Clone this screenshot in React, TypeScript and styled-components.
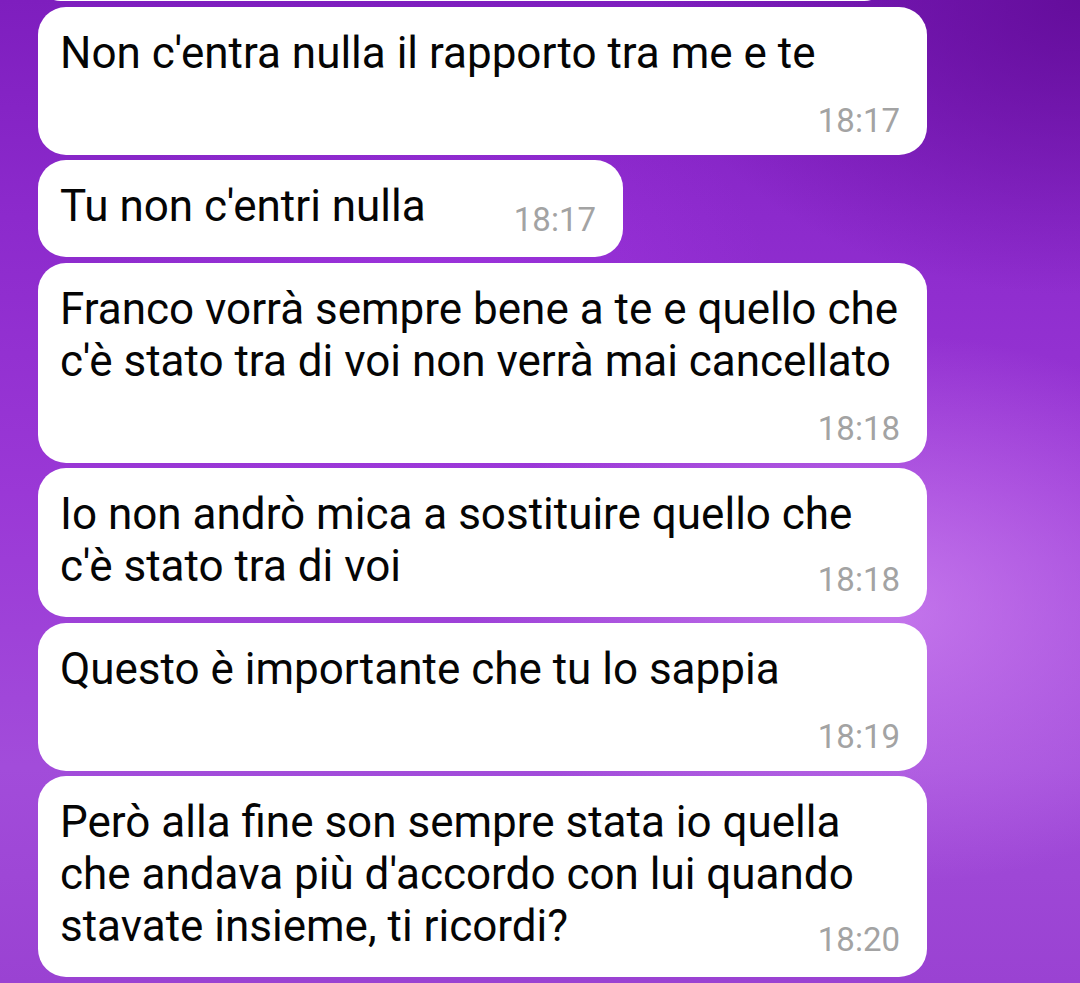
import React from "react";
import styled, { createGlobalStyle } from "styled-components";

type Message = {
  lines: string[];
  time?: string;
  width: number;
  stacked?: boolean;
};

// the list is scrolled to the bottom, only the lower edge of the first bubble shows
const messages: Message[] = [
  { lines: [], width: 849 },
  { lines: ["Non c'entra nulla il rapporto tra me e te"], time: "18:17", width: 889, stacked: true },
  { lines: ["Tu non c'entri nulla"], time: "18:17", width: 585 },
  {
    lines: ["Franco vorrà sempre bene a te e quello che", "c'è stato tra di voi non verrà mai cancellato"],
    time: "18:18",
    width: 889,
    stacked: true,
  },
  { lines: ["Io non andrò mica a sostituire quello che", "c'è stato tra di voi"], time: "18:18", width: 889 },
  { lines: ["Questo è importante che tu lo sappia"], time: "18:19", width: 889, stacked: true },
  {
    lines: [
      "Però alla fine son sempre stata io quella",
      "che andava più d'accordo con lui quando",
      "stavate insieme, ti ricordi?",
    ],
    time: "18:20",
    width: 889,
  },
];

const GlobalStyle = createGlobalStyle`
  html, body {
    margin: 0;
    padding: 0;
    height: 100%;
  }
  body {
    font-family: Roboto, "Noto Sans", "Liberation Sans", sans-serif;
    -webkit-font-smoothing: antialiased;
  }
  * {
    box-sizing: border-box;
  }
`;

const App: React.FC = () => {
  return (
    <>
      <GlobalStyle />
      <ChatArea>
        {messages.map((m, i) => (
          <Bubble key={i} $width={m.width} $stacked={!!m.stacked}>
            <MsgText>
              {m.lines.map((l, j) => (
                <Line key={j}>{l}</Line>
              ))}
            </MsgText>
            {m.time && <Time $stacked={!!m.stacked}>{m.time}</Time>}
          </Bubble>
        ))}
      </ChatArea>
    </>
  );
};

const ChatArea = styled.div`
  width: 1080px;
  height: 983px;
  overflow: hidden;
  display: flex;
  flex-direction: column;
  justify-content: flex-end;
  align-items: flex-start;
  gap: 5.5px;
  padding: 0 0 6px 38px;
  background:
    radial-gradient(ellipse 40% 30% at 100% 0%, rgba(96, 10, 150, 0.85), rgba(96, 10, 150, 0) 100%),
    radial-gradient(ellipse 55% 40% at 82% 62%, rgba(212, 140, 244, 0.7), rgba(212, 140, 244, 0) 70%),
    radial-gradient(ellipse 45% 35% at 40% 30%, rgba(176, 60, 240, 0.4), rgba(176, 60, 240, 0) 70%),
    linear-gradient(180deg, #7e1ebe 0%, #8c2acc 22%, #9a38d6 50%, #a24cda 78%, #9a42d2 100%);
`;

const Bubble = styled.div<{ $width: number; $stacked: boolean }>`
  flex-shrink: 0;
  width: ${(p) => p.$width}px;
  background: #ffffff;
  border-radius: 28px;
  padding: 20px 27px 25px 22px;
  display: grid;
  grid-template-columns: minmax(0, 1fr);
  grid-template-areas: ${(p) => (p.$stacked ? `"text" "time"` : `"text"`)};
`;

const MsgText = styled.div`
  grid-area: text;
  font-size: 44px;
  line-height: 52px;
  color: #050505;
`;

const Line = styled.span`
  display: block;
  white-space: nowrap;
`;

const Time = styled.span<{ $stacked: boolean }>`
  grid-area: ${(p) => (p.$stacked ? "time" : "text")};
  justify-self: end;
  align-self: end;
  font-size: 33px;
  line-height: 33px;
  color: #a3a3a3;
  margin-top: ${(p) => (p.$stacked ? "25px" : "0")};
  margin-bottom: ${(p) => (p.$stacked ? "-7px" : "-4px")};
`;

export default App;
